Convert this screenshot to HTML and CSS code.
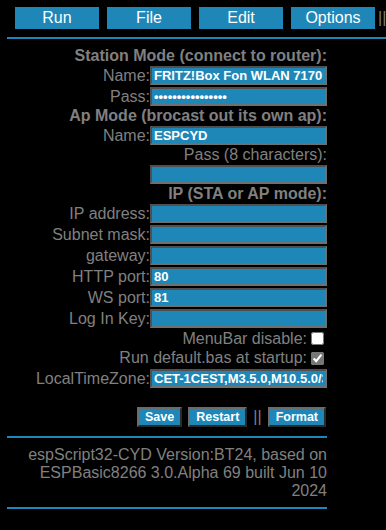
FILE: index.html
```html
<!DOCTYPE html>
<html lang="en">
<head>
  <meta charset="UTF-8">
  <title>espScript32-CYD Settings</title>
  <meta name="viewport" content="width=device-width, initial-scale=1.0">
  <link rel="stylesheet" href="styles.css">
</head>
<body>

  <!-- Top menu -->
  <div class="menu">
    <a class="menu-btn" href="#">Run</a>
    <a class="menu-btn" href="#">File</a>
    <a class="menu-btn" href="#">Edit</a>
    <a class="menu-btn" href="#">Options</a>
    <span class="sep">||</span>
  </div>
  <div class="rule rule-wide"></div>

  <!-- Settings form -->
  <form class="panel">
    <div class="head">Station Mode (connect to router):</div>
    <label class="row">Name:<input type="text" value="FRITZ!Box Fon WLAN 7170"></label>
    <label class="row">Pass:<input type="password" value="abcdefghijklmnop"></label>

    <div class="head">Ap Mode (brocast out its own ap):</div>
    <label class="row">Name:<input type="text" value="ESPCYD"></label>
    <div class="text">Pass (8 characters):</div>
    <label class="row"><input type="password" value=""></label>

    <div class="head">IP (STA or AP mode):</div>
    <label class="row">IP address:<input type="text"></label>
    <label class="row">Subnet mask:<input type="text"></label>
    <label class="row">gateway:<input type="text"></label>
    <label class="row">HTTP port:<input type="text" value="80"></label>
    <label class="row">WS port:<input type="text" value="81"></label>
    <label class="row">Log In Key:<input type="text"></label>

    <label class="check-row">MenuBar disable:<input type="checkbox"></label>
    <label class="check-row">Run default.bas at startup:<input type="checkbox" checked></label>

    <label class="row">LocalTimeZone:<input type="text" value="CET-1CEST,M3.5.0,M10.5.0/3"></label>

    <div class="actions">
      <button type="button" class="btn">Save</button>
      <button type="button" class="btn">Restart</button>
      <span class="sep">||</span>
      <button type="button" class="btn">Format</button>
    </div>

    <div class="rule"></div>
    <p class="footer">espScript32-CYD Version:BT24, based on<br>ESPBasic8266 3.0.Alpha 69 built Jun 10<br>2024</p>
    <div class="rule"></div>
  </form>

</body>
</html>
```

FILE: styles.css
```css
:root {
  --blue: #1e87b8;
  --grey: #808080;
}

body {
  margin: 0;
  padding: 7px 0 0 7px;
  background: #000;
  color: var(--grey);
  font-family: 'Liberation Sans', Arial, sans-serif;
  font-size: 16px;
  overflow: hidden;
}

/* top menu */
.menu {
  display: flex;
  gap: 8px;
  padding-left: 8px;
  white-space: nowrap;
  height: 22px;
}

.menu-btn {
  flex: none;
  width: 84px;
  height: 22px;
  line-height: 22px;
  background: var(--blue);
  color: #fff;
  text-align: center;
  text-decoration: none;
}

.menu .sep {
  margin-left: -5px;
  line-height: 22px;
}

.rule {
  height: 2px;
  background: var(--blue);
}

.rule-wide {
  margin-top: 8px;
}

/* form */
.panel {
  width: 320px;
  padding-top: 8px;
  text-align: right;
}

.head, .text {
  line-height: 18px;
}

.head {
  font-weight: bold;
}

.row {
  display: flex;
  justify-content: flex-end;
  align-items: center;
  height: 21px;
}

.row input {
  width: 177px;
  height: 19px;
  box-sizing: border-box;
  margin: 0;
  padding: 0 2px;
  background: var(--blue);
  border: 2px solid #6f6f6f;
  border-top-color: #505050;
  border-left-color: #505050;
  color: #fff;
  font-family: 'Liberation Sans', Arial, sans-serif;
  font-size: 13px;
  font-weight: bold;
  outline: none;
}

.check-row {
  display: flex;
  justify-content: flex-end;
  align-items: center;
  height: 19.5px;
}

.check-row input {
  width: 13px;
  height: 13px;
  margin: 0 3px 0 4px;
  accent-color: #767676;
}

/* buttons */
.actions {
  display: flex;
  justify-content: flex-end;
  align-items: center;
  gap: 6px;
  margin: 18px 1px 9px 0;
}

.btn {
  height: 20px;
  padding: 0 6px;
  background: var(--blue);
  color: #fff;
  font-family: 'Liberation Sans', Arial, sans-serif;
  font-size: 12.5px;
  font-weight: bold;
  line-height: 16px;
  border: 2px solid #2a2a2a;
  border-top-color: #6b6b6b;
  border-left-color: #6b6b6b;
  cursor: pointer;
}

.footer {
  margin: 8px 0 7px;
  line-height: 18px;
}
```
